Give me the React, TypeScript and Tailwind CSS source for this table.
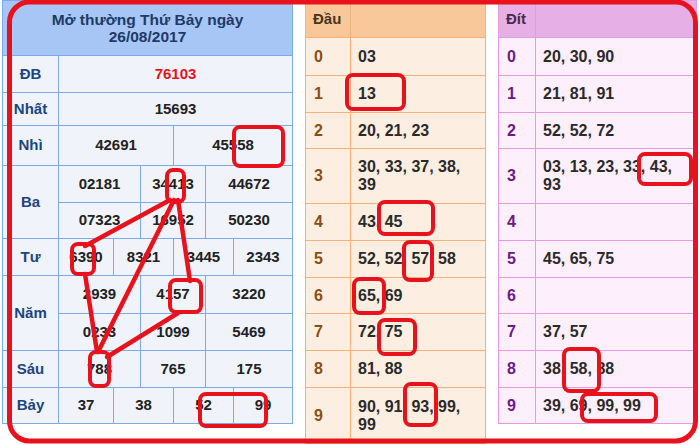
import React from "react";

const num = "font-bold text-[15px] text-[#222]";

function LeftTable() {
  const cell = "bg-[#f0f3fa] flex items-center justify-center " + num;
  const label = "bg-[#f0f3fa] flex items-center justify-center font-bold text-[15px] text-[#1b4580]";
  return (
    <div className="grid grid-cols-[55px_54px_26px_32px_31px_27px_58px] grid-rows-[54px_36px_32px_39px_36px_35px_36px_37px_36px_36px_35px] gap-px p-px bg-[#7ea9ea] w-[291px]">
      <div className="col-span-7 bg-[#a7c6f5] flex flex-col items-center justify-center font-bold text-[15.5px] leading-[17px] text-[#1e3a66]">
        <span>Mở thường Thứ Bảy ngày</span>
        <span>26/08/2017</span>
      </div>

      <div className={label}>ĐB</div>
      <div className={cell + " col-span-6 !text-[#e3121b]"}>76103</div>

      <div className={label}>Nhất</div>
      <div className={cell + " col-span-6"}>15693</div>

      <div className={label}>Nhì</div>
      <div className={cell + " col-span-3"}>42691</div>
      <div className={cell + " col-span-3"}>45558</div>

      <div className={label + " row-span-2"}>Ba</div>
      <div className={cell + " col-span-2"}>02181</div>
      <div className={cell + " col-span-2"}>34413</div>
      <div className={cell + " col-span-2"}>44672</div>
      <div className={cell + " col-span-2"}>07323</div>
      <div className={cell + " col-span-2"}>16952</div>
      <div className={cell + " col-span-2"}>50230</div>

      <div className={label}>Tư</div>
      <div className={cell}>6390</div>
      <div className={cell + " col-span-2"}>8321</div>
      <div className={cell + " col-span-2"}>3445</div>
      <div className={cell}>2343</div>

      <div className={label + " row-span-2"}>Năm</div>
      <div className={cell + " col-span-2"}>2939</div>
      <div className={cell + " col-span-2"}>4157</div>
      <div className={cell + " col-span-2"}>3220</div>
      <div className={cell + " col-span-2"}>0233</div>
      <div className={cell + " col-span-2"}>1099</div>
      <div className={cell + " col-span-2"}>5469</div>

      <div className={label}>Sáu</div>
      <div className={cell + " col-span-2"}>788</div>
      <div className={cell + " col-span-2"}>765</div>
      <div className={cell + " col-span-2"}>175</div>

      <div className={label}>Bảy</div>
      <div className={cell}>37</div>
      <div className={cell + " col-span-2"}>38</div>
      <div className={cell + " col-span-2"}>52</div>
      <div className={cell}>99</div>
    </div>
  );
}

type LotoProps = {
  title: string;
  rows: string[];
  heights: string;
  width: string;
  cols: string;
  border: string;
  head: string;
  body: string;
  digit: string;
  titleColor: string;
};

function LotoTable(p: LotoProps) {
  return (
    <div className={`grid gap-px p-px ${p.cols} ${p.heights} ${p.border} ${p.width}`}>
      <div className={`${p.head} flex items-center pl-[7px] font-bold text-[15px] ${p.titleColor}`}>{p.title}</div>
      <div className={p.head}></div>
      {p.rows.map((r, i) => (
        <React.Fragment key={i}>
          <div className={`${p.body} flex items-center pl-[8px] font-bold text-[16px] ${p.digit}`}>{i}</div>
          <div className={`${p.body} flex items-center pl-[7px] pr-[14px] font-bold text-[16px] leading-[18px] text-[#2a2a2a]`}>
            <span>{r}</span>
          </div>
        </React.Fragment>
      ))}
    </div>
  );
}

function Marks() {
  const boxes = [
    [234, 127, 49, 39],
    [167, 170, 17, 32],
    [72, 244, 22, 30],
    [170, 280, 31, 32],
    [90, 352, 19, 34],
    [200, 394, 66, 32],
    [347, 75, 57, 34],
    [379, 202, 54, 32],
    [404, 242, 28, 38],
    [354, 279, 30, 34],
    [379, 320, 36, 34],
    [405, 384, 31, 41],
    [639, 154, 52, 30],
    [564, 349, 35, 42],
    [582, 394, 74, 27],
  ];
  const lines = [
    [170, 200, 85, 246],
    [174, 200, 98, 352],
    [178, 200, 190, 281],
    [85, 274, 97, 352],
    [178, 313, 107, 357],
  ];
  return (
    <svg className="absolute inset-0 pointer-events-none" width="700" height="445" viewBox="0 0 700 445">
      <g fill="none" stroke="#e8121c" strokeLinecap="round" strokeLinejoin="round">
        <rect x="9.5" y="2" width="686" height="439" rx="20" strokeWidth="5" />
        {boxes.map(([x, y, w, h], i) => (
          <rect key={i} x={x} y={y} width={w} height={h} rx="6" strokeWidth="4" />
        ))}
        {lines.map(([x1, y1, x2, y2], i) => (
          <line key={i} x1={x1} y1={y1} x2={x2} y2={y2} strokeWidth="4.5" />
        ))}
      </g>
    </svg>
  );
}

export default function App() {
  return (
    <div className="relative w-[700px] h-[445px] overflow-hidden bg-white font-['Liberation_Sans',Arial,sans-serif]">
      <div className="flex items-start gap-[12px] pl-[2px]">
        <LeftTable />
        <LotoTable
          title="Đầu"
          rows={["03", "13", "20, 21, 23", "30, 33, 37, 38, 39", "43, 45", "52, 52, 57, 58", "65, 69", "72, 75", "81, 88", "90, 91, 93, 99, 99"]}
          cols="grid-cols-[44px_134px]"
          heights="grid-rows-[36px_37px_36px_35px_54px_36px_36px_35px_36px_36px_55px]"
          width="w-[181px]"
          border="bg-[#f4b27a]"
          head="bg-[#f9c89a]"
          body="bg-[#fdeee2]"
          digit="text-[#8a4e12]"
          titleColor="text-[#4a3418]"
        />
        <LotoTable
          title="Đít"
          rows={["20, 30, 90", "21, 81, 91", "52, 52, 72", "03, 13, 23, 33, 43, 93", "", "45, 65, 75", "", "37, 57", "38, 58, 88", "39, 69, 99, 99"]}
          cols="grid-cols-[36px_160px]"
          heights="grid-rows-[36px_37px_36px_35px_54px_36px_36px_35px_36px_36px_35px]"
          width="w-[199px]"
          border="bg-[#e49be3]"
          head="bg-[#e6afe6]"
          body="bg-[#fdeffb]"
          digit="text-[#6b1a8a]"
          titleColor="text-[#4a2a4a]"
        />
      </div>
      <Marks />
    </div>
  );
}
